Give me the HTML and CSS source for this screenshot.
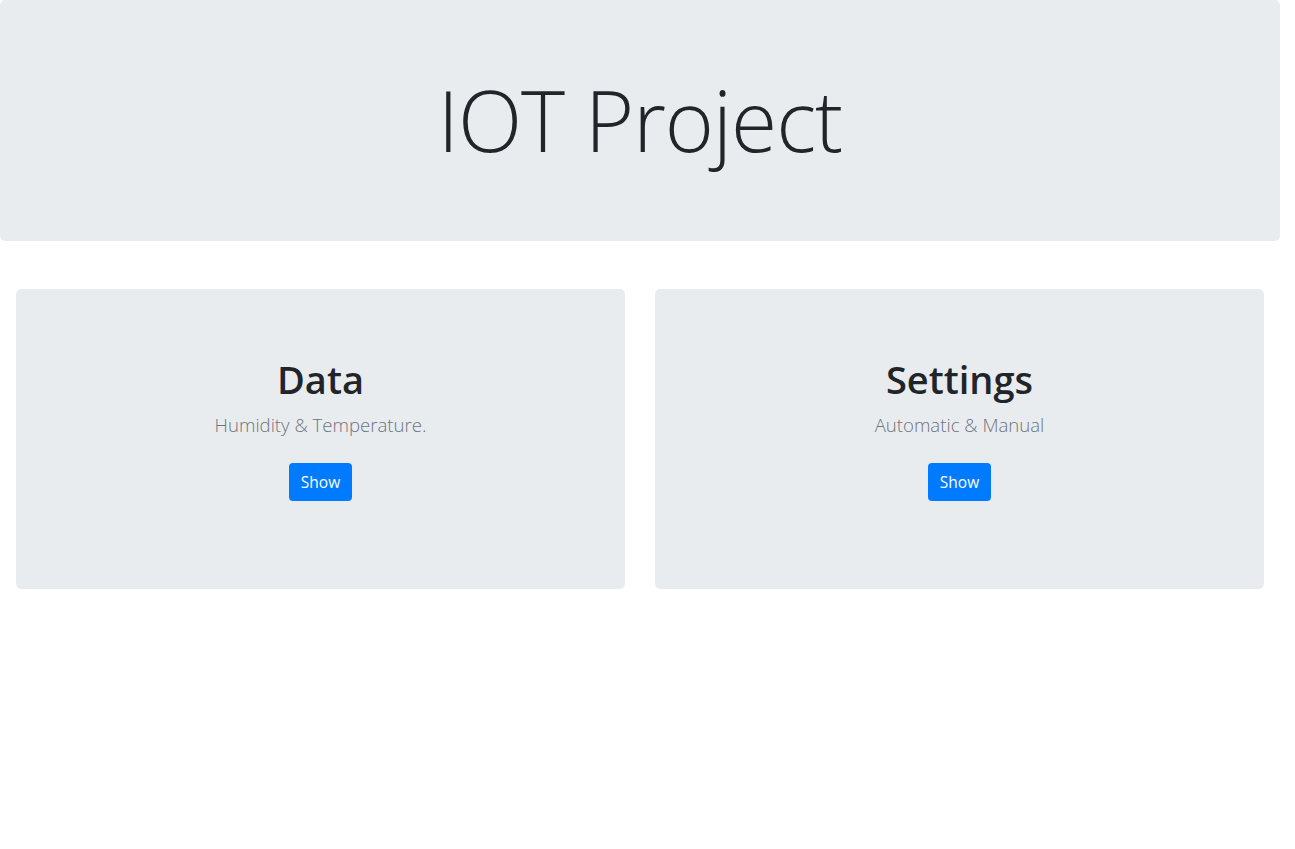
FILE: index.html
```html
<!DOCTYPE html>
<html lang="en">
<head>
<meta charset="utf-8">
<title>IOT Project</title>
<link rel="stylesheet" href="styles.css">
</head>
<body>
<div class="page">
  <header class="hero">
    <h1 class="hero-title">IOT Project</h1>
  </header>
  <main class="cards">
    <section class="card">
      <h2 class="card-title">Data</h2>
      <p class="card-lead">Humidity &amp; Temperature.</p>
      <a class="btn" href="#">Show</a>
    </section>
    <section class="card">
      <h2 class="card-title">Settings</h2>
      <p class="card-lead">Automatic &amp; Manual</p>
      <a class="btn" href="#">Show</a>
    </section>
  </main>
</div>
</body>
</html>
```
FILE: styles.css
```css
html, body {
  margin: 0;
  padding: 0;
  background: #fff;
}
body {
  font-family: "Open Sans", "Noto Sans", "Liberation Sans", sans-serif;
  color: #212529;
}
.page {
  width: 1280px;
}
.hero {
  height: 241px;
  background: #e9ecef;
  border-radius: 5px;
  display: flex;
  align-items: center;
  justify-content: center;
}
.hero-title {
  margin: 0;
  font-size: 84px;
  font-weight: 300;
  line-height: 1.2;
  letter-spacing: -1px;
}
.cards {
  display: grid;
  grid-template-columns: 1fr 1fr;
  column-gap: 30px;
  padding: 48px 16px 0;
}
.card {
  height: 300px;
  box-sizing: border-box;
  background: #e9ecef;
  border-radius: 5px;
  display: flex;
  flex-direction: column;
  align-items: center;
  padding-top: 68px;
}
.card-title {
  margin: 0 0 8px;
  font-size: 38px;
  font-weight: 600;
  line-height: 1.2;
}
.card-lead {
  margin: 0 0 25px;
  font-size: 18.6px;
  font-weight: 300;
  line-height: 1.5;
  color: #6c757d;
}
.btn {
  display: inline-block;
  box-sizing: border-box;
  height: 38px;
  padding: 0 12px;
  line-height: 38px;
  font-size: 15.5px;
  color: #fff;
  background: #007bff;
  border-radius: 4px;
  text-decoration: none;
}
```
